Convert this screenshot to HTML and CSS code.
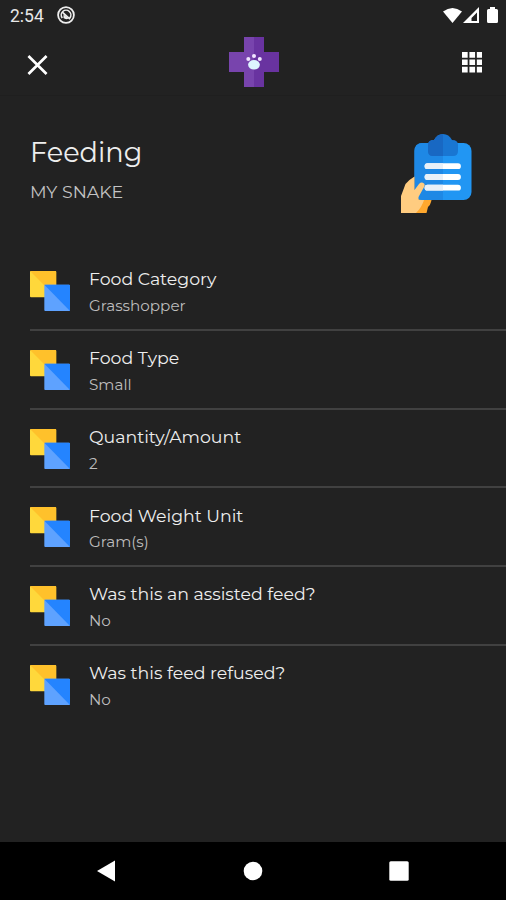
FILE: index.html
```html
<!DOCTYPE html>
<html lang="en">
<head>
<meta charset="utf-8">
<title>Feeding</title>
<link rel="stylesheet" href="styles.css">
</head>
<body>
<svg class="defs" aria-hidden="true">
  <symbol id="squares" viewBox="0 0 41 41">
    <rect width="26.5" height="26.5" rx="1" fill="#ffd83b"/>
    <path d="M0 0H25.500q1 0 1 1V26.500z" fill="#ffc12b"/>
    <rect x="14.500" y="14" width="26" height="26.500" rx="1" fill="#5ea2ff"/>
    <path d="M14.500 14H39.500q1 0 1 1V40.500z" fill="#2484ff"/>
  </symbol>
</svg>
<div class="screen">
  <header class="status">
    <span class="clock">2:54</span>
    <svg class="sync" viewBox="0 0 18 18" fill="none" stroke="#eee"><circle cx="9" cy="9" r="7.900" stroke-width="1.800"/><path d="M5.300 12A4.800 4.800 0 1 1 12.800 12M5.300 6.200L13 13.200" stroke-width="1.600"/><path d="M6.500 8.200L11.500 12.500A4.300 4.300 0 0 1 6.500 12z" fill="#eee" stroke="none"/></svg>
    <svg class="signals" viewBox="0 0 56 18" fill="#fff"><path d="M0 4.500Q9.500-2.600 19 4.500L9.500 16z"/><path fill-rule="evenodd" d="M20 16L36 0V16zM28.500 11V14H34V5.500z"/><path d="M47 0h5v2h1.500q1.500 0 1.500 1.500v11q0 1.500-1.500 1.500h-8q-1.500 0-1.500-1.500v-11q0-1.500 1.500-1.500H47z"/></svg>
  </header>
  <nav class="appbar">
    <svg class="close" viewBox="0 0 22 22"><path d="M1.500 1.500L20.500 20.500M20.500 1.500L1.500 20.500" stroke="#fff" stroke-width="2.800"/></svg>
    <svg class="logo" viewBox="0 0 50 50"><path d="M15 0H35V15H50V35H35V50H15V35H0V15H15z" fill="#6933a0"/><path d="M15 0H25V50H15V35H0V15H15z" fill="#7844ad"/><g fill="#f0e5ff"><circle cx="19.300" cy="22" r="2"/><circle cx="25" cy="19" r="2"/><circle cx="30.800" cy="22" r="2"/></g><ellipse cx="25" cy="27.800" rx="5.900" ry="4.800" fill="#ddf5ff"/></svg>
    <svg class="grid" viewBox="0 0 21 21" fill="#fff"><path d="M0 0h5.800v5.800H0zM7.600 0h5.800v5.800H7.600zM15.200 0H21v5.800h-5.800zM0 7.600h5.800v5.800H0zM7.600 7.600h5.800v5.800H7.600zM15.200 7.600H21v5.800h-5.800zM0 15.200h5.800V21H0zM7.600 15.200h5.800V21H7.600zM15.200 15.200H21V21h-5.800z"/></svg>
  </nav>
  <section class="heading">
    <div>
      <h1>Feeding</h1>
      <p class="pet">MY SNAKE</p>
    </div>
    <svg class="clipboard" viewBox="0 0 71 80">
      <path d="M14 60H32L30 68Q29 72 27 73L25.500 79H13z" fill="#ffa82e"/>
      <rect x="13.500" y="9" width="57" height="57" rx="8" fill="#2196f3"/>
      <path d="M42 9H21.500q-8 0-8 8v41q0 8 8 8H42z" fill="#1e88e5"/>
      <path d="M27 11q0-5 6-5 3-6 9-6t9 6q6 0 6 5v6q0 5-5 5H32q-5 0-5-5z" fill="#1976d2"/>
      <path d="M42 0q-6 0-9 6-6 0-6 5v6q0 5 5 5h10z" fill="#1868c3"/>
      <path d="M26.500 32.200H57M26.500 43H57M26.500 53.700H57" stroke="#fff" stroke-width="5.800" stroke-linecap="round"/>
      <path d="M26.500 29.300H42v5.800H26.500a2.900 2.900 0 0 1 0-5.800M26.500 40.100H42v5.800H26.500a2.900 2.900 0 0 1 0-5.800M26.500 50.800H42v5.800H26.500a2.900 2.900 0 0 1 0-5.800" fill="#e8f0f8"/>
      <path d="M13.500 42.500V56L18 50Q20.500 47.500 23 49.500Q24.500 51 22.500 54L17.500 63V66H23Q21 73 15 79H0V62L4.500 50Q9 45 13.500 42.500z" fill="#ffcc80"/>
    </svg>
  </section>
  <main class="list">
    <div class="row"><svg class="icon"><use href="#squares"/></svg><div><h2>Food Category</h2><p>Grasshopper</p></div></div>
    <div class="row"><svg class="icon"><use href="#squares"/></svg><div><h2>Food Type</h2><p>Small</p></div></div>
    <div class="row"><svg class="icon"><use href="#squares"/></svg><div><h2>Quantity/Amount</h2><p>2</p></div></div>
    <div class="row"><svg class="icon"><use href="#squares"/></svg><div><h2>Food Weight Unit</h2><p>Gram(s)</p></div></div>
    <div class="row"><svg class="icon"><use href="#squares"/></svg><div><h2>Was this an assisted feed?</h2><p>No</p></div></div>
    <div class="row"><svg class="icon"><use href="#squares"/></svg><div><h2>Was this feed refused?</h2><p>No</p></div></div>
  </main>
  <footer class="navbar">
    <svg viewBox="0 0 20 22"><path d="M19 .500V21.500L1 11z" fill="#fff"/></svg>
    <svg viewBox="0 0 20 22"><circle cx="10" cy="11" r="9.300" fill="#fff"/></svg>
    <svg viewBox="0 0 20 22"><rect x=".300" y="1.300" width="19.400" height="19.400" rx="1.500" fill="#fff"/></svg>
  </footer>
</div>
</body>
</html>
```
FILE: styles.css
```css
* { box-sizing: border-box; }
body { margin: 0; background: #222; color: #eee; font-family: Montserrat, Inter, sans-serif; }
h1, h2, p { margin: 0; font-weight: 400; white-space: nowrap; }
svg { display: block; flex: none; }
.defs { width: 0; height: 0; position: absolute; }
.screen { width: 506px; height: 900px; display: flex; flex-direction: column; overflow: hidden; }
.status { height: 32px; display: flex; align-items: center; padding: 0 7px 0 10px; }
.clock { font: 400 17.5px/32px Roboto, sans-serif; width: 47px; color: #e8e8e8; }
.sync { width: 18px; height: 18px; margin-bottom: 2px; }
.signals { width: 56px; height: 18px; margin-left: auto; }
.appbar { height: 64px; display: grid; grid-template-columns: 1fr 50px 1fr; align-items: start; padding: 5px 24px 0 27px; border-bottom: 1px solid #1f1f1f; }
.close { width: 21px; height: 22px; margin-top: 17px; }
.logo { width: 50px; height: 50px; margin-left: -.5px; }
.grid { width: 20.5px; height: 20.5px; margin-top: 15px; justify-self: end; }
.heading { height: 156px; display: flex; justify-content: space-between; padding: 38px 34px 0 30px; }
h1 { font-size: 27.2px; line-height: 38px; }
.pet { font-size: 17.4px; line-height: 24px; margin-top: 8px; color: #c4c4c4; }
.clipboard { width: 71px; height: 80px; }
.list { flex: 1; padding-left: 29.5px; }
.row { height: 78.75px; display: flex; padding-top: 19px; border-bottom: 2px solid #414141; }
.row:last-child { border-bottom: 0; }
.icon { width: 40.5px; height: 40.5px; margin-right: 19px; }
h2 { font-size: 17.35px; line-height: 24px; margin-top: -3.6px; }
.row p { font-size: 15.2px; line-height: 20px; margin-top: 4.8px; color: #bdbdbd; }
.navbar { height: 58px; background: #000; display: flex; align-items: center; justify-content: space-between; padding: 0 97px 0 96px; }
.navbar svg { width: 20px; height: 22px; }
```
